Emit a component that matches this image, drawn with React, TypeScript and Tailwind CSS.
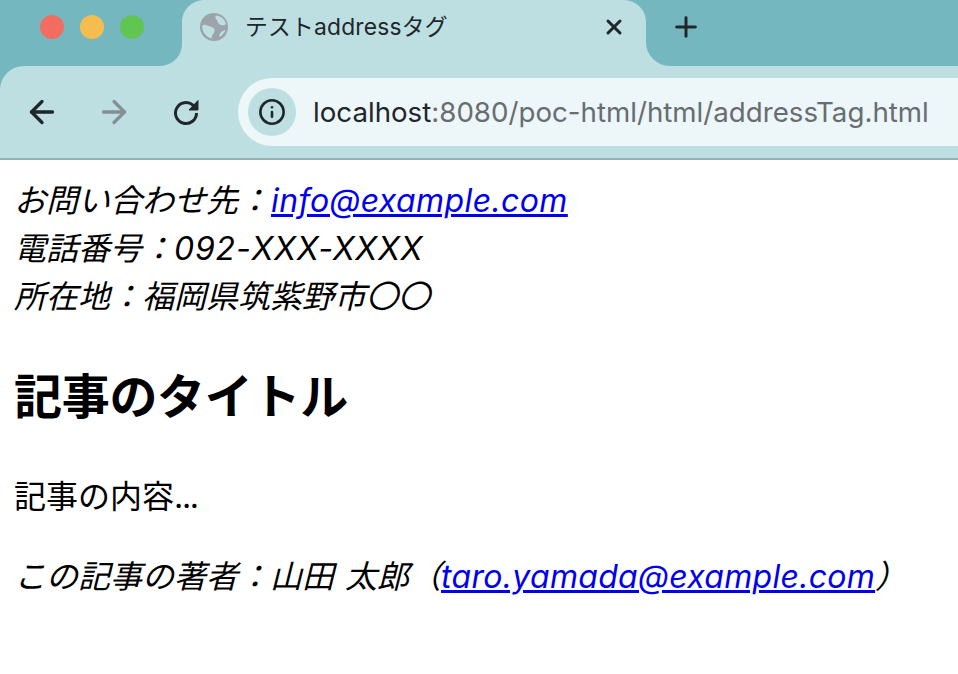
import { ArrowLeft, ArrowRight, Info, Plus, X } from 'lucide-react';

function Favicon() {
  return (
    <svg viewBox="0 0 28 28" className="h-7 w-7">
      <circle cx="14" cy="14" r="14" fill="#9ca3ab" />
      <path d="M16 2.500C21 3 25 6.500 26 11C24 13 21 12.500 19 11C17 9.500 18 7.500 16.500 6.500C15.500 5.500 15 4 16 2.500Z" fill="#bedfe2" />
      <path d="M2 13C4 10.500 7 12 9 13C12 14 15 15 14.500 18C14 21 12 21 11.500 25.500C6 24 2.500 19.500 2 13Z" fill="#bedfe2" />
      <path d="M25.500 17C24.500 20 22 22.500 19.500 24C18.500 21.500 21 18 25.500 17Z" fill="#bedfe2" />
    </svg>
  );
}

function Reload() {
  return (
    <svg viewBox="0 0 40 40" className="ml-[34px] h-10 w-10 text-[#20262b]">
      <path d="M30.500 21A10.500 10.500 0 1 1 27 13.200L30 16" fill="none" stroke="currentColor" strokeWidth="3" />
      <path d="M32 8.500V18H23Z" fill="currentColor" stroke="currentColor" strokeWidth="1" strokeLinejoin="round" />
    </svg>
  );
}

export default function App() {
  return (
    <div className="min-h-[674px] bg-white font-['Inter','Noto_Sans_CJK_JP',sans-serif] text-black">
      <div className="bg-[#74b7bf]">
        <div className="flex h-[66px] bg-[#bedfe2]">
          <div className="flex w-[182px] items-center gap-[16px] rounded-br-[22px] bg-[#74b7bf] pl-[40px] pb-[12px]">
            <span className="h-6 w-6 rounded-full bg-[#f26d60]" />
            <span className="h-6 w-6 rounded-full bg-[#f5bd4f]" />
            <span className="h-6 w-6 rounded-full bg-[#61c554]" />
          </div>
          <div className="w-[464px] bg-[linear-gradient(#74b7bf_50%,#bedfe2_50%)]">
            <div className="flex h-full items-center rounded-t-[22px] bg-[#bedfe2] pb-[12px] pl-[18px] pr-[20px]">
              <Favicon />
              <span className="ml-[17px] flex-1 text-[22.800px] leading-[28px] tracking-[0.200px] text-[#20262b]">テストaddressタグ</span>
              <X size={24} strokeWidth={3} className="text-[#20262b]" />
            </div>
          </div>
          <div className="flex flex-1 items-center rounded-bl-[24px] bg-[#74b7bf] pb-[12px] pl-[24px]">
            <Plus size={32} strokeWidth={2.200} className="text-[#20262b]" />
          </div>
        </div>
        <div className="flex h-[94px] items-center rounded-tl-[24px] border-b-2 border-[#94b0b5] bg-[#bedfe2] pl-[24px]">
          <ArrowLeft size={36} strokeWidth={2.200} className="text-[#20262b]" />
          <ArrowRight size={36} strokeWidth={2.200} className="ml-[36px] text-[#868f94]" />
          <Reload />
          <div className="ml-[32px] flex h-[68px] flex-1 items-center rounded-l-[34px] bg-[#edf6f8] pl-[10px]">
            <div className="flex h-12 w-12 items-center justify-center rounded-full bg-[#bedfe2]">
              <Info size={28} strokeWidth={2.200} className="text-[#20262b]" />
            </div>
            <span className="ml-[17px] pt-px text-[27.700px] text-[#676d71]">
              <span className="text-[#20262b]">localhost</span>:8080/poc-html/html/addressTag.html
            </span>
          </div>
        </div>
      </div>

      <div className="pl-[14px] pt-[17px]">
        <address className="text-[32px] leading-[48px] italic">
          お問い合わせ先：<a href="#" className="ml-px tracking-[0.400px] text-[#0000ee] underline">info@example.com</a>
          <br />
          電話番号：<span className="tracking-[0.800px]">092-XXX-XXXX</span>
          <br />
          所在地：福岡県筑紫野市〇〇
        </address>
        <h1 className="my-10 text-[48px] leading-[72px] font-bold tracking-[-0.300px]">記事のタイトル</h1>
        <p className="mb-8 text-[32px] leading-[48px]">
          記事の内容<span className="tracking-[-1.300px]">...</span>
        </p>
        <address className="text-[32px] leading-[48px] italic [word-spacing:2px]">
          この記事の著者：山田 太郎（<a href="#" className="tracking-[0.300px] text-[#0000ee] underline">taro.yamada@example.com</a>）
        </address>
      </div>
    </div>
  );
}
